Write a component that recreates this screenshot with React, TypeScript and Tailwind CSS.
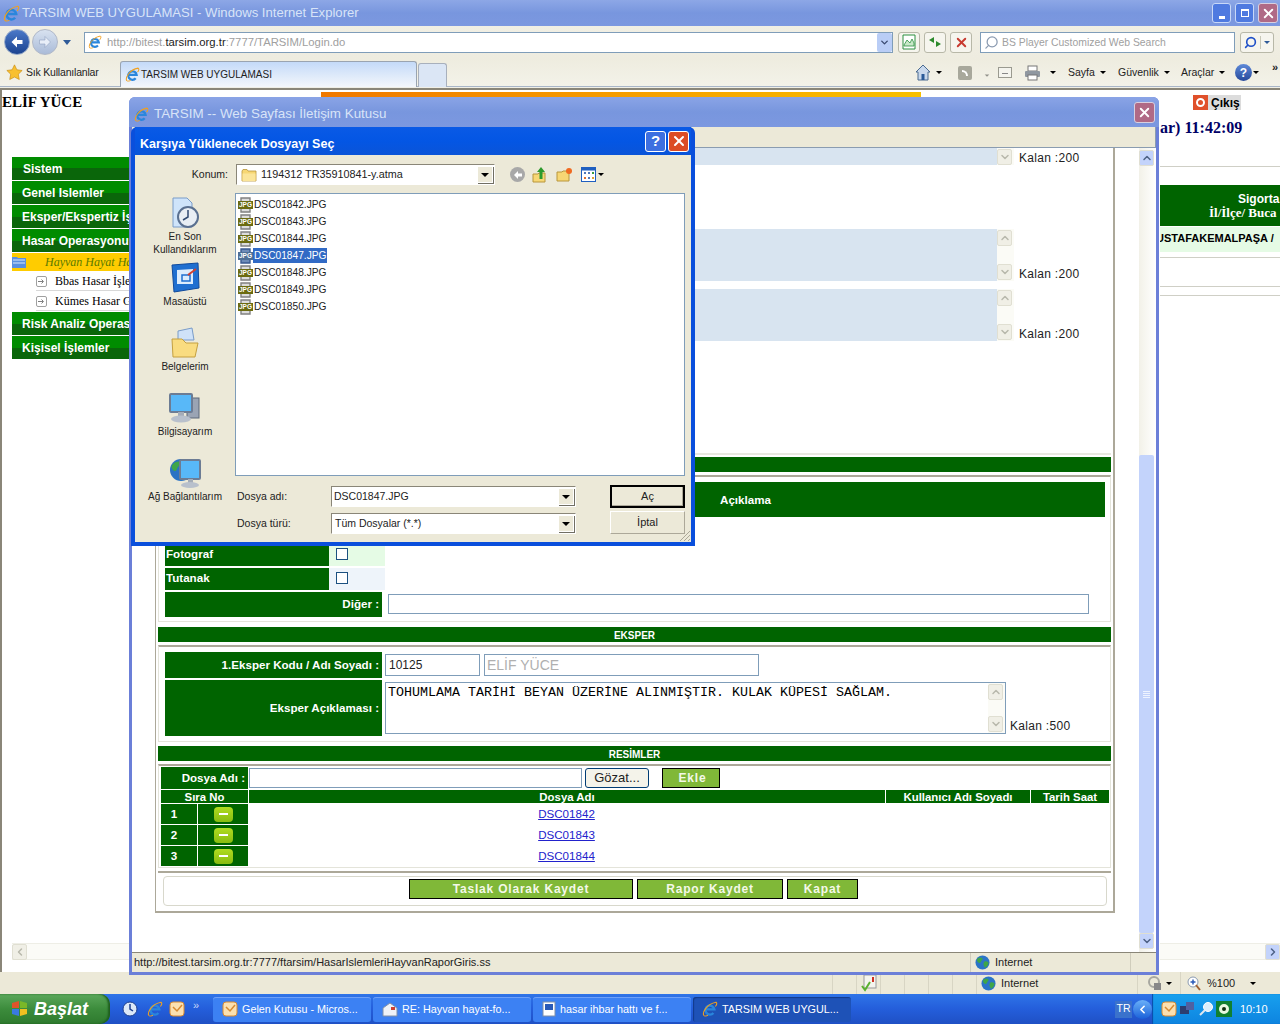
import React from "react";
import { ChevronUp, ChevronDown, ChevronLeft, ChevronRight, X, Search } from "lucide-react";

// small drawings -------------------------------------------------------------
function IeLogo({ size = 16 }: { size?: number }) {
  return (
    <svg width={size} height={size} viewBox="0 0 16 16" className="shrink-0">
      <path d="M3.6 8.4h8.8a4.5 4.5 0 1 0-1 3.6" fill="none" stroke="#2a86dc" strokeWidth="2.4" />
      <path d="M1.8 14.6C0.2 11.5 4.5 3 14 1.2c1.4.8.6 2.8-.6 4.300" fill="none" stroke="#f0a020" strokeWidth="1.1" />
      <path d="M1.8 14.6c1.200.8 3 .4 4.200-.4" fill="none" stroke="#f0a020" strokeWidth="1" />
    </svg>
  );
}

function Globe({ size = 16 }: { size?: number }) {
  return (
    <svg width={size} height={size} viewBox="0 0 16 16" className="shrink-0">
      <circle cx="8" cy="8" r="7.500" fill="#2b74c8" />
      <path d="M3 3.500c2-1.500 4-1 5 0 .5 1.500-1 2-1.500 3.500S5 9 3.500 8 1.500 5 3 3.500zM10 7c2-1 4 0 4.500 1.500-.5 3-2.500 4.500-4 5-.5-2-2-3-1.500-4.500z" fill="#3fa648" />
    </svg>
  );
}

function Folder({ size = 16 }: { size?: number }) {
  return (
    <svg width={size} height={size} viewBox="0 0 16 16" className="shrink-0">
      <path d="M1 4l1-1.500h4L7 4h8v10H1z" fill="#f7d774" stroke="#b8963c" strokeWidth=".8" />
      <path d="M1.500 6.500h13V14h-13z" fill="#fbe59a" />
    </svg>
  );
}

function JpgIcon({ dim = false }: { dim?: boolean }) {
  return (
    <svg width="15" height="16" viewBox="0 0 15 16" className="shrink-0">
      <path d="M3 1h9v14H3z" fill={dim ? "#6d8bb8" : "#dcdcdc"} stroke={dim ? "#3a5a90" : "#808080"} strokeWidth="1.400" />
      <rect x="0" y="4" width="15" height="8" fill={dim ? "#4f6f96" : "#6b6b10"} />
      <text x="7.500" y="10.400" textAnchor="middle" fontSize="6.500" fontWeight="700" fill="#fff" fontFamily="Liberation Sans">JPG</text>
    </svg>
  );
}

function Caret({ className = "" }: { className?: string }) {
  return <span className={`inline-block h-0 w-0 border-x-[3px] border-t-[3px] border-x-transparent border-t-black ${className}`} />;
}

function ScrollBtn({ dir, active = false }: { dir: "up" | "down" | "left" | "right"; active?: boolean }) {
  const cls = active ? "text-[#4d6185]" : "text-[#b8b8ac]";
  const Icon = dir === "up" ? ChevronUp : dir === "down" ? ChevronDown : dir === "left" ? ChevronLeft : ChevronRight;
  return (
    <div className={`flex h-[16px] w-[15px] shrink-0 items-center justify-center rounded-[2px] border border-[#e0dfd2] ${active ? "bg-[#c3d3fb]" : "bg-[#f0efe6]"}`}>
      <Icon size={12} strokeWidth={3} className={cls} />
    </div>
  );
}

function ComboBtn() {
  return (
    <div className="flex h-[17px] w-[16px] shrink-0 items-center justify-center border border-[#ffffff] bg-[#ece9d8] shadow-[1px_1px_0_#716f64]">
      <span className="h-0 w-0 border-x-[4px] border-t-[4px] border-x-transparent border-t-black" />
    </div>
  );
}

// top chrome -----------------------------------------------------------------
function TitleBar() {
  return (
    <div className="flex h-[26px] items-center bg-gradient-to-b from-[#8da7e6] via-[#7896de] to-[#7c98e0] pl-[3px] pr-[2px]">
      <IeLogo size={17} />
      <span className="ml-[2px] text-[13.100px] text-[#d8e4f8]">TARSIM WEB UYGULAMASI - Windows Internet Explorer</span>
      <div className="ml-auto flex gap-[4px]">
        <div className="flex h-[20px] w-[19px] items-end justify-center rounded-[3px] border border-[#c8d8f8] bg-[#4f7ae0] pb-[3px]"><span className="h-[3px] w-[6px] bg-white" /></div>
        <div className="flex h-[20px] w-[19px] items-center justify-center rounded-[3px] border border-[#c8d8f8] bg-[#4f7ae0]"><span className="h-[8px] w-[8px] border border-t-2 border-white" /></div>
        <div className="flex h-[20px] w-[20px] items-center justify-center rounded-[3px] border border-[#d8d0e0] bg-[#b06a86]"><X size={15} strokeWidth={3} className="text-white" /></div>
      </div>
    </div>
  );
}

function AddressBar() {
  return (
    <div className="flex h-[32px] items-center bg-gradient-to-b from-[#f1efe4] to-[#eeece0] pl-[4px] text-[11px]">
      <div className="flex h-[26px] w-[26px] items-center justify-center rounded-full border border-[#94a8c8] bg-gradient-to-b from-[#4a78c8] to-[#1c4490]">
        <svg width="16" height="16" viewBox="0 0 16 16"><path d="M8 2.500L2.500 8 8 13.500V10h5.500V6H8z" fill="#fff" /></svg>
      </div>
      <div className="ml-[2px] flex h-[26px] w-[26px] items-center justify-center rounded-full border border-[#b0b8c8] bg-gradient-to-b from-[#d8e2f0] to-[#aabbd8]">
        <svg width="16" height="16" viewBox="0 0 16 16"><path d="M8 2.500L13.500 8 8 13.500V10H2.500V6H8z" fill="#e8eef8" stroke="#8fa0c0" strokeWidth=".6" /></svg>
      </div>
      <span className="ml-[5px] h-0 w-0 border-x-[4px] border-t-[5px] border-x-transparent border-t-[#2f5a98]" />
      <div className="ml-[13px] flex h-[21px] w-[809px] items-center border border-[#7f9db9] bg-white pl-[3px]">
        <IeLogo size={14} />
        <span className="ml-[5px] pt-px text-[11.300px] text-[#a0a0a0]">http://bitest.<span className="text-[#222]">tarsim.org.tr</span>:7777/TARSIM/Login.do</span>
        <div className="ml-auto flex h-[19px] w-[15px] items-center justify-center rounded-[2px] bg-[#b9cdf6]"><ChevronDown size={11} strokeWidth={3} className="text-[#3a4a70]" /></div>
      </div>
      <div className="ml-[5px] flex h-[21px] w-[22px] items-center justify-center rounded-[3px] border border-[#b8b8a8] bg-[#f6f5ee]">
        <svg width="14" height="16" viewBox="0 0 14 16"><path d="M1 1h12v14H1z" fill="#fff" stroke="#2c9040" /><path d="M2 11l3-5 3 3 2-4 2 4v3H2z" fill="#c8e8c8" stroke="#2c9040" strokeWidth=".8" /></svg>
      </div>
      <div className="ml-[4px] flex h-[21px] w-[22px] items-center justify-center rounded-[3px] border border-[#b8b8a8] bg-[#f6f5ee]">
        <svg width="16" height="14" viewBox="0 0 16 14"><path d="M7 2L2 5l5 3V6z M9 12l5-3-5-3v2z" fill="#2c8a2c" /></svg>
      </div>
      <div className="ml-[4px] flex h-[21px] w-[22px] items-center justify-center rounded-[3px] border border-[#b8b8a8] bg-[#f6f5ee]"><X size={15} strokeWidth={3} className="text-[#c83a30]" /></div>
      <div className="ml-[8px] flex h-[21px] w-[255px] items-center border border-[#7f9db9] bg-white pl-[3px] text-[#a0a0a0]">
        <Search size={15} className="-scale-x-100 text-[#8a9ab0]" />
        <span className="ml-[3px] pt-[2px] text-[10.400px]">BS Player Customized Web Search</span>
      </div>
      <div className="ml-[5px] flex h-[21px] w-[34px] items-center rounded-[3px] border border-[#b8b8a8] bg-[#f6f5ee]">
        <div className="flex w-[20px] justify-center border-r border-[#c8c8b8]"><Search size={13} strokeWidth={3} className="-scale-x-100 text-[#1f50c8]" /></div>
        <div className="flex flex-1 justify-center"><span className="h-0 w-0 border-x-[3px] border-t-[3px] border-x-transparent border-t-[#2f5a98]" /></div>
      </div>
    </div>
  );
}

function MenuLink({ label, w }: { label: string; w: string }) {
  return (
    <span className={`flex items-center gap-[5px] whitespace-nowrap text-[10.500px] text-[#222] ${w}`}>
      {label}
      <Caret />
    </span>
  );
}

function TabsBar() {
  return (
    <div className="flex h-[32px] flex-col bg-gradient-to-b from-[#eeecdf] to-[#f4f3ea]">
      <div className="flex h-[29px] border-b border-[#a9b6c8]">
        <div className="flex w-[120px] items-center pl-[6px] pt-[1px]">
          <svg width="17" height="17" viewBox="0 0 16 16"><path d="M8 .8l2.200 4.600 5 .7-3.600 3.500.9 5L8 12.300l-4.500 2.300.9-5L.8 6.100l5-.7z" fill="#f8c030" stroke="#c88a10" strokeWidth=".6" /></svg>
          <span className="ml-[3px] whitespace-nowrap text-[10.500px] tracking-[-0.2px] text-[#222]">Sık Kullanılanlar</span>
        </div>
        <div className="mt-[3px] flex h-[26px] w-[297px] items-center rounded-t-[3px] border border-b-0 border-[#9aa4b0] bg-gradient-to-b from-[#c4daf8] to-[#f4f7fb] pl-[4px]">
          <IeLogo size={15} />
          <span className="ml-[1px] whitespace-nowrap text-[10px] text-[#222]">TARSIM WEB UYGULAMASI</span>
        </div>
        <div className="ml-[1px] mt-[5px] h-[24px] w-[29px] rounded-t-[3px] border border-b-0 border-[#a8b0bc] bg-[#dbe6f5]" />
        <div className="ml-[468px] flex items-center pt-[1px]">
          <div className="flex w-[42px] items-center gap-[5px]">
            <svg width="16" height="17" viewBox="0 0 16 17"><path d="M8 1L1 8h2v8h10V8h2z" fill="#c8d8ec" stroke="#4a6a90" /><rect x="6.500" y="10" width="3" height="6" fill="#2a5a98" /></svg>
            <Caret />
          </div>
          <div className="ml-px flex h-[14px] w-[14px] items-center justify-center rounded-[2px] bg-[#a8a89c]"><span className="h-[6px] w-[6px] rounded-tr-[6px] border-r-2 border-t-2 border-white" /></div>
          <span className="ml-[12px] scale-75 opacity-40"><Caret /></span>
          <div className="ml-[8px] h-[11px] w-[14px] border border-[#9a9a90] bg-[#f4f4ee]"><div className="mt-[5px] ml-[3px] h-px w-[6px] bg-[#888]" /></div>
          <svg width="17" height="16" viewBox="0 0 17 16" className="ml-[12px]"><rect x="4" y="1" width="9" height="5" fill="#fff" stroke="#777" /><rect x="1" y="6" width="15" height="6" rx="1" fill="#8f97a0" /><rect x="4" y="10" width="9" height="5" fill="#fff" stroke="#777" /></svg>
          <Caret className="ml-[9px]" />
          <MenuLink label="Sayfa" w="ml-[12px] w-[50px]" />
          <MenuLink label="Güvenlik" w="w-[63px]" />
          <MenuLink label="Araçlar" w="w-[54px]" />
          <div className="flex h-[17px] w-[17px] items-center justify-center rounded-full bg-gradient-to-b from-[#5f8ad8] to-[#274a9c] text-[12px] font-bold text-white">?</div>
          <Caret className="ml-[1px]" />
        </div>
        <span className="ml-[13px] text-[11px] font-bold leading-[18px] text-[#222]">»</span>
      </div>
      <div className="h-[1px] bg-[#f0efe6]" />
      <div className="h-[2px] bg-[#8a8678]" />
    </div>
  );
}

// background page ---------------------------------------------------------------
function SideItem({ label, pl = "pl-[10px]" }: { label: string; pl?: string }) {
  return (
    <div className={`flex h-[23px] items-center whitespace-nowrap bg-gradient-to-b from-[#008c00] from-50% to-[#0a660a] to-50% text-[12px] font-bold text-white ${pl}`}>
      {label}
    </div>
  );
}

function SubItem({ label }: { label: string }) {
  return (
    <div className="ml-[24px] flex h-[19px] items-center whitespace-nowrap border-b border-[#d8d8d8] [font-family:'Liberation_Serif',serif] text-[12px] text-black">
      <span className="flex h-[11px] w-[11px] shrink-0 items-center justify-center rounded-[2px] border border-[#a0a0a0]">
        <svg width="7" height="7" viewBox="0 0 7 7"><path d="M0 3.500h5M3.500 1.500l2 2-2 2" fill="none" stroke="#808080" /></svg>
      </span>
      <span className="ml-[8px]">{label}</span>
    </div>
  );
}

function PageLeft() {
  return (
    <div className="flex h-full flex-col border-l-2 border-[#8a8678] pt-[3px]">
      <div className="whitespace-nowrap [font-family:'Liberation_Serif',serif] text-[15px] font-bold leading-[18px] text-black">ELİF YÜCE</div>
      <div className="ml-[10px] mt-[46px] flex flex-col gap-px">
        <SideItem label="Sistem" pl="pl-[11px]" />
        <SideItem label="Genel Islemler" />
        <SideItem label="Eksper/Ekspertiz İşlemleri" />
        <SideItem label="Hasar Operasyonu" />
        <div className="flex h-[18px] items-center whitespace-nowrap bg-[#ffcc00] [font-family:'Liberation_Serif',serif] text-[12px] italic text-[#5a7a00]">
          <svg width="14" height="12" viewBox="0 0 14 12" className="shrink-0"><path d="M0 1h5l1 1h8v10H0z" fill="#5a90e0" /><path d="M1 4h12M1 7h12" stroke="#d8e8fc" /></svg>
          <span className="ml-[19px]">Hayvan Hayat Hasar</span>
        </div>
        <SubItem label="Bbas Hasar İşlemleri" />
        <SubItem label="Kümes Hasar Girişi" />
        <SideItem label="Risk Analiz Operasyonu" />
        <SideItem label="Kişisel İşlemler" />
      </div>
      <div className="ml-[10px] mt-auto mb-[12px] flex h-[17px] items-center border-y border-[#eeeee6] bg-[#fbfbf7]">
        <ScrollBtn dir="left" />
      </div>
    </div>
  );
}

function PageRight() {
  return (
    <div className="flex h-full flex-col overflow-hidden">
      <div className="ml-[33px] mt-[5px] flex h-[15px] w-[48px] items-center bg-[#dcdcdc]">
        <span className="flex h-[15px] w-[15px] items-center justify-center bg-[#e0502a]"><span className="h-[9px] w-[9px] rounded-full border-2 border-white" /></span>
        <span className="ml-[3px] text-[12px] font-bold text-black">Çıkış</span>
      </div>
      <div className="mt-[9px] whitespace-nowrap [font-family:'Liberation_Serif',serif] text-[16px] font-bold leading-[18px] text-[#000066]">ar) 11:42:09</div>
      <div className="mt-[29px] h-px bg-[#cfcfc6]" />
      <div className="mt-[18px] flex h-[41px] flex-col justify-center bg-[#006400] text-[12px] font-bold leading-[13px] text-white">
        <span className="pl-[78px]">Sigorta</span>
        <span className="pl-[49px] [font-family:'Liberation_Serif',serif] text-[13px]">İl/İlçe/ Buca</span>
      </div>
      <div className="mt-px flex h-[25px] items-center whitespace-nowrap bg-[#e5fbe5] pb-[2px] text-[11px] font-bold text-black"><span className="-ml-[4px]">USTAFAKEMALPAŞA /</span></div>
      <div className="mt-[5px] h-px bg-[#cfcfc6]" />
      <div className="mt-[28px] h-px bg-[#cfcfc6]" />
      <div className="mt-[8px] h-px bg-[#cfcfc6]" />
      <div className="mt-auto mb-[12px] flex h-[17px] items-center justify-end border-y border-[#eeeee6] bg-[#fbfbf7]">
        <ScrollBtn dir="right" active />
      </div>
    </div>
  );
}

// dialog form -------------------------------------------------------------------
function Bar({ label }: { label: string }) {
  return <div className="flex h-[15px] items-center justify-center bg-[#006400] pt-px text-[10px] font-bold text-white">{label}</div>;
}

function Label({ children, className = "" }: { children?: React.ReactNode; className?: string }) {
  return <div className={`flex shrink-0 items-center bg-[#006400] text-[11.600px] font-bold text-white ${className}`}>{children}</div>;
}

function Memo({ tinted = false, onlyDown = false, className = "", children }: { tinted?: boolean; onlyDown?: boolean; className?: string; children?: React.ReactNode }) {
  return (
    <div className={`flex justify-between ${tinted ? "bg-[#d8e4f0]" : "border border-[#7f9db9] bg-white"} ${className}`}>
      <div className="min-w-0 flex-1">{children}</div>
      <div className="flex w-[17px] shrink-0 flex-col justify-between bg-[#fbfbf6] py-px">
        {!onlyDown && <ScrollBtn dir="up" />}
        <ScrollBtn dir="down" />
      </div>
    </div>
  );
}

function Kalan({ value, className = "" }: { value: number; className?: string }) {
  return <span className={`self-end whitespace-nowrap text-[12px] leading-[13px] tracking-[0.3px] text-[#222] ${className}`}>Kalan :{value}</span>;
}

function GreenBtn({ label, className = "" }: { label: string; className?: string }) {
  return <div className={`flex h-[20px] items-center justify-center border border-black bg-[#80b838] text-[12px] font-bold tracking-[0.8px] text-[#f4f8e8] ${className}`}>{label}</div>;
}

function PhotoRow({ n, file }: { n: number; file: string }) {
  return (
    <div className="mt-px flex h-[20px]">
      <Label className="w-[36px] justify-center pr-[10px]">{n}</Label>
      <div className="ml-px flex w-[50px] items-center justify-center bg-[#006400]">
        <span className="flex h-[15px] w-[19px] items-center justify-center rounded-[4px] bg-gradient-to-b from-[#b0dc20] to-[#88bc10]"><span className="h-[2px] w-[9px] bg-white" /></span>
      </div>
      <div className="flex w-[636px] items-center justify-center pl-px text-[11.600px] text-[#2222cc] underline">{file}</div>
    </div>
  );
}

function ScrollbarV() {
  return (
    <div className="flex w-[17px] shrink-0 flex-col bg-gradient-to-r from-[#f2f1e8] to-[#ffffff] pt-[2px]">
      <ScrollBtn dir="up" active />
      <div className="h-[289px]" />
      <div className="flex h-[478px] w-[15px] items-center justify-center rounded-[2px] bg-[#c3d3fb]">
        <div className="flex w-[7px] flex-col gap-px"><span className="h-px bg-[#eef3ff]" /><span className="h-px bg-[#eef3ff]" /><span className="h-px bg-[#eef3ff]" /><span className="h-px bg-[#eef3ff]" /></div>
      </div>
      <ScrollBtn dir="down" active />
    </div>
  );
}

function FormPage() {
  return (
    <div className="ml-[23px] h-[765px] w-[960px] border-b-2 border-l border-r-2 border-[#aca899] pl-[2px]">
      <div className="w-[953px]">
        <div className="flex h-[17px]">
          <Memo tinted onlyDown className="w-[856px]" />
          <Kalan value={200} className="ml-[5px]" />
        </div>
        <div className="mt-[64px] flex h-[52px]">
          <Memo tinted className="w-[856px]" />
          <Kalan value={200} className="ml-[5px]" />
        </div>
        <div className="mt-[8px] flex h-[52px]">
          <Memo tinted className="w-[856px]" />
          <Kalan value={200} className="ml-[5px]" />
        </div>
        <div className="mt-[112px] h-[2px] bg-[#e8e8e0]" />
        <div className="mt-[2px]"><Bar label="GENEL" /></div>

        <div className="mt-[3px] h-[147px] border-b border-t-2 border-x border-[#e4e4da] border-t-[#aca899] pl-[6px] pt-[5px]">
          <div className="flex h-[35px]">
            <Label className="w-[221px]" />
            <Label className="w-[719px] justify-center pt-px">Açıklama</Label>
          </div>
          <div className="mt-[27px] flex h-[22px]">
            <Label className="w-[164px] pb-[2px] pl-px">Fotograf</Label>
            <div className="flex w-[56px] items-center bg-[#e5fbe5] pb-[2px] pl-[7px]"><span className="h-[12px] w-[12px] border border-[#1c5180] bg-white" /></div>
          </div>
          <div className="mt-[2px] flex h-[22px]">
            <Label className="w-[164px] pb-[2px] pl-px">Tutanak</Label>
            <div className="flex w-[56px] items-center bg-[#eef4fa] pb-[2px] pl-[7px]"><span className="h-[12px] w-[12px] border border-[#1c5180] bg-white" /></div>
          </div>
          <div className="mt-[2px] flex h-[25px]">
            <Label className="w-[217px] justify-end pb-[2px] pr-[3px]">Diğer :</Label>
            <div className="ml-[6px] mt-[2px] h-[20px] w-[701px] border border-[#7f9db9] bg-white" />
          </div>
        </div>

        <div className="mt-[5px]"><Bar label="EKSPER" /></div>
        <div className="mt-[3px] h-[97px] border-b border-t-2 border-x border-[#e4e4da] border-t-[#aca899] pl-[6px] pt-[5px]">
          <div className="flex h-[26px]">
            <Label className="w-[217px] justify-end pr-[3px]">1.Eksper Kodu / Adı Soyadı :</Label>
            <div className="ml-[3px] mt-[2px] flex h-[22px] w-[95px] items-center border border-[#7f9db9] bg-white pl-[3px] text-[12px] text-[#222]">10125</div>
            <div className="ml-[4px] mt-[2px] flex h-[22px] w-[275px] items-center border border-[#7f9db9] bg-white pl-[2px] text-[14px] text-[#b0b0b0]">ELİF YÜCE</div>
          </div>
          <div className="mt-[2px] flex h-[56px]">
            <Label className="w-[217px] justify-end pr-[3px]">Eksper Açıklaması :</Label>
            <Memo className="ml-[3px] mt-[2px] h-[52px] w-[621px]">
              <div className="whitespace-nowrap pl-[2px] pt-[3px] [font-family:'Liberation_Mono',monospace] text-[13.330px] leading-[14px] text-black">TOHUMLAMA TARİHİ BEYAN ÜZERİNE ALINMIŞTIR. KULAK KÜPESİ SAĞLAM.</div>
            </Memo>
            <Kalan value={500} className="mb-[3px] ml-[4px]" />
          </div>
        </div>

        <div className="mt-[4px]"><Bar label="RESİMLER" /></div>
        <div className="mt-[3px] h-[104px] border-b border-t-2 border-x border-[#e4e4da] border-t-[#aca899] pl-[2px] pt-px">
          <div className="flex h-[22px]">
            <Label className="w-[87px] justify-end pr-[3px]">Dosya Adı :</Label>
            <div className="ml-px mt-px h-[20px] w-[333px] border border-[#7f9db9] bg-white" />
            <div className="ml-[3px] mt-px flex h-[20px] w-[64px] items-center justify-center rounded-[3px] border border-[#003c74] bg-[#f4f3ea] text-[13px] text-[#222]">Gözat...</div>
            <GreenBtn label="Ekle" className="ml-[13px] mt-px w-[58px] pl-[3px]" />
          </div>
          <div className="mt-px flex h-[13px] text-center text-[11.400px] font-bold leading-[14px] text-white">
            <div className="w-[87px] bg-[#006400]">Sıra No</div>
            <div className="ml-px w-[636px] bg-[#006400]">Dosya Adı</div>
            <div className="ml-px w-[144px] bg-[#006400]">Kullanıcı Adı Soyadı</div>
            <div className="ml-px w-[78px] bg-[#006400]">Tarih Saat</div>
          </div>
          <PhotoRow n={1} file="DSC01842" />
          <PhotoRow n={2} file="DSC01843" />
          <PhotoRow n={3} file="DSC01844" />
        </div>

        <div className="mt-[3px] h-[39px] border-t-2 border-[#aca899] pl-[5px] pr-[4px] pt-[3px]">
          <div className="h-[30px] rounded-[4px] border border-[#d8d8cc] pl-[245px] pt-[2px]">
            <div className="flex">
              <GreenBtn label="Taslak Olarak Kaydet" className="w-[224px]" />
              <GreenBtn label="Rapor Kaydet" className="ml-[4px] w-[146px]" />
              <GreenBtn label="Kapat" className="ml-[4px] w-[71px]" />
            </div>
          </div>
        </div>
      </div>
    </div>
  );
}

function ModalWindow() {
  return (
    <div className="absolute left-[129px] top-[97px] flex h-[878px] w-[1030px] flex-col rounded-t-[6px] bg-[#6b7fd8] px-[3px] pb-[3px]">
      <div className="-mx-[3px] flex h-[30px] shrink-0 items-center rounded-t-[6px] bg-gradient-to-b from-[#8aa4e6] via-[#7896de] to-[#7c98e0] pl-[5px] pr-[4px]">
        <span className="pt-[4px]"><IeLogo size={15} /></span>
        <span className="ml-[5px] pt-[4px] text-[13.400px] text-[#d8e4f8]">TARSIM -- Web Sayfası İletişim Kutusu</span>
        <div className="ml-auto flex h-[21px] w-[21px] items-center justify-center rounded-[3px] border border-[#d8d0e0] bg-[#b06a86]"><X size={15} strokeWidth={3} className="text-white" /></div>
      </div>
      <div className="h-[21px] shrink-0 border-b border-r border-[#8a9cb0] bg-[#ece9d8]" />
      <div className="flex h-[804px] shrink-0 bg-white">
        <div className="flex-1"><FormPage /></div>
        <ScrollbarV />
      </div>
      <div className="flex h-[20px] shrink-0 items-center border-t border-[#8a8678] bg-[#ece9d8] pl-[2px] text-[11px] text-[#222]">
        <span className="w-[836px] whitespace-nowrap">http://bitest.tarsim.org.tr:7777/ftarsim/HasarIslemleriHayvanRaporGiris.ss</span>
        <div className="flex h-full w-[161px] items-center border-x border-[#d0cdbc] pl-[4px]">
          <Globe size={15} />
          <span className="ml-[5px]">Internet</span>
        </div>
      </div>
    </div>
  );
}

// file picker ---------------------------------------------------------------------
const files = ["DSC01842.JPG", "DSC01843.JPG", "DSC01844.JPG", "DSC01847.JPG", "DSC01848.JPG", "DSC01849.JPG", "DSC01850.JPG"];

function Place({ icon, label, h }: { icon: React.ReactNode; label: React.ReactNode; h: string }) {
  return (
    <div className={`flex flex-col items-center text-center text-[10px] leading-[13px] text-[#222] ${h}`}>
      <div className="flex h-[32px] items-center justify-center">{icon}</div>
      <div className="mt-[1px] whitespace-nowrap">{label}</div>
    </div>
  );
}

function FilePicker() {
  return (
    <div className="absolute left-[131px] top-[127px] flex h-[419px] w-[564px] flex-col rounded-t-[6px] bg-[#0a4fdc] px-[4px] pb-[4px]">
      <div className="flex h-[28px] shrink-0 items-center bg-gradient-to-b from-[#0a5ae6] via-[#0456e4] to-[#0a54d8] pl-[5px] pr-[2px]">
        <span className="pt-[6px] text-[12.500px] font-bold text-white">Karşıya Yüklenecek Dosyayı Seç</span>
        <div className="ml-auto flex h-[21px] w-[21px] items-center justify-center rounded-[3px] border border-white bg-[#3d6fe0] text-[15px] font-bold text-white">?</div>
        <div className="ml-[2px] flex h-[21px] w-[21px] items-center justify-center rounded-[3px] border border-white bg-[#dc4c24]"><X size={16} strokeWidth={3} className="text-white" /></div>
      </div>
      <div className="relative flex flex-1 flex-col bg-[#ece9d8] text-[11px] text-[#222]">
        <div className="flex h-[21px] shrink-0 mt-[9px] items-center">
          <span className="w-[93px] text-right text-[10.500px]">Konum:</span>
          <div className="ml-[8px] flex h-[21px] w-[259px] items-center justify-between border border-[#ffffff] border-l-[#8a8678] border-t-[#8a8678] bg-white pl-[4px] pr-[1px]">
            <span className="flex items-center gap-[4px] text-[10.800px]"><Folder size={16} />1194312 TR35910841-y.atma</span>
            <ComboBtn />
          </div>
          <div className="ml-[15px] flex h-[15px] w-[15px] items-center justify-center rounded-full bg-[#a8a8a8]"><svg width="10" height="10" viewBox="0 0 10 10"><path d="M5 1L1 5l4 4V6.500h4v-3H5z" fill="#fff" /></svg></div>
          <svg width="16" height="17" viewBox="0 0 16 17" className="ml-[7px]"><path d="M1 8h5l1-1h6v9H1z" fill="#f7d774" stroke="#b8963c" /><path d="M9 1l4 5h-2.500v7h-3V6H5z" fill="#2c9a2c" /></svg>
          <svg width="17" height="15" viewBox="0 0 17 15" className="ml-[8px]"><path d="M1 5h5l1-1h6v10H1z" fill="#f7d774" stroke="#b8963c" /><circle cx="13" cy="4" r="3" fill="#f06a20" /></svg>
          <svg width="15" height="15" viewBox="0 0 15 15" className="ml-[8px]"><rect x=".5" y=".5" width="14" height="14" fill="#fff" stroke="#1f5fc0" /><rect x="1" y="1" width="13" height="2.500" fill="#1f5fc0" /><rect x="3" y="5" width="2" height="2" fill="#5078b8" /><rect x="7" y="5" width="2" height="2" fill="#5078b8" /><rect x="11" y="5" width="2" height="2" fill="#3a9a40" /><rect x="3" y="10" width="2" height="2" fill="#e07030" /><rect x="7" y="10" width="2" height="2" fill="#5078b8" /><rect x="11" y="10" width="2" height="2" fill="#e0a030" /></svg>
          <Caret className="ml-[2px]" />
        </div>
        <div className="mt-[8px] flex">
          <div className="w-[100px] shrink-0 pt-[4px]">
            <Place h="h-[65px]" label={<>En Son<br />Kullandıklarım</>} icon={
              <svg width="32" height="32" viewBox="0 0 32 32"><path d="M4 1h14l5 5v24H4z" fill="#cfe4fa" stroke="#7a9cc8" /><circle cx="19" cy="20" r="10" fill="#e8eef4" stroke="#5a7090" strokeWidth="2" /><path d="M19 13v7l-5 3" stroke="#304a70" strokeWidth="1.500" fill="none" /></svg>
            } />
            <Place h="h-[65px]" label="Masaüstü" icon={
              <svg width="32" height="32" viewBox="0 0 32 32"><path d="M3 3l26-2 1 25-25 4z" fill="#1f6fd0" stroke="#104a9c" /><path d="M8 8l16-1v15H8z" fill="#dcecfc" /><path d="M13 13h8v6h-8z" fill="none" stroke="#1f6fd0" strokeWidth="1.500" /><path d="M19 13l8-6" stroke="#d04030" strokeWidth="2" /></svg>
            } />
            <Place h="h-[65px]" label="Belgelerim" icon={
              <svg width="30" height="32" viewBox="0 0 30 32"><path d="M8 4l14-3 2 12H8z" fill="#cfe2f8" stroke="#7a9cc8" /><path d="M2 12l10 0 4 4h12l-3 14H3z" fill="#f9dc80" stroke="#c4a040" /></svg>
            } />
            <Place h="h-[65px]" label="Bilgisayarım" icon={
              <svg width="32" height="32" viewBox="0 0 32 32"><rect x="18" y="6" width="12" height="20" fill="#9aa4b4" stroke="#5c6878" /><rect x="1" y="2" width="22" height="18" rx="1" fill="#58b8f8" stroke="#6c7c94" strokeWidth="2" /><rect x="9" y="20" width="6" height="5" fill="#a4acb8" /><ellipse cx="12" cy="27" rx="10" ry="3.500" fill="#b8c0cc" /></svg>
            } />
            <Place h="h-[40px]" label="Ağ Bağlantılarım" icon={
              <svg width="34" height="32" viewBox="0 0 34 32"><circle cx="13" cy="13" r="11" fill="#2a72c4" /><path d="M4 8c3-4 7-4 9-3 0 3-3 4-4 7s-3 2-4 1-2-3-1-5z" fill="#3fa648" /><rect x="12" y="3" width="20" height="19" rx="1" fill="#58b8f8" stroke="#6c7c94" strokeWidth="2" /><rect x="20" y="22" width="5" height="5" fill="#a4acb8" /><ellipse cx="22" cy="28" rx="9" ry="3" fill="#b8c0cc" /></svg>
            } />
          </div>
          <div className="w-[450px] shrink-0">
            <div className="h-[283px] border border-[#7f9db9] bg-white pl-[2px] pt-[2px]">
              {files.map((f) => {
                const sel = f === "DSC01847.JPG";
                return (
                  <div key={f} className="flex h-[17px] items-center">
                    <JpgIcon dim={sel} />
                    <span className={`px-px text-[10.200px] leading-[15px] ${sel ? "bg-[#316ac5] text-white" : "text-[#222]"}`}>{f}</span>
                  </div>
                );
              })}
            </div>
            <div className="mt-[9px] flex">
              <div className="w-[375px] pl-[2px] pt-px text-[10.500px]">
                <div className="flex h-[21px] items-center">
                  <span className="w-[94px]">Dosya adı:</span>
                  <div className="flex h-[21px] w-[245px] items-center justify-between border border-white border-l-[#8a8678] border-t-[#8a8678] bg-white pl-[2px] pr-px">
                    DSC01847.JPG
                    <ComboBtn />
                  </div>
                </div>
                <div className="mt-[6px] flex h-[21px] items-center">
                  <span className="w-[94px]">Dosya türü:</span>
                  <div className="flex h-[21px] w-[245px] items-center justify-between border border-white border-l-[#8a8678] border-t-[#8a8678] bg-white pl-[3px] pr-px">
                    Tüm Dosyalar (*.*)
                    <ComboBtn />
                  </div>
                </div>
              </div>
              <div className="w-[75px]">
                <div className="flex h-[23px] items-center justify-center border-2 border-black bg-[#ece9d8] shadow-[inset_-1px_-1px_0_#aca899]">Aç</div>
                <div className="mt-[3px] flex h-[23px] items-center justify-center border border-white border-b-[#aca899] border-r-[#aca899] bg-[#ece9d8]">İptal</div>
              </div>
            </div>
          </div>
        </div>
        <svg width="12" height="12" viewBox="0 0 12 12" className="absolute bottom-0 right-0"><path d="M11 1L1 11M11 5L5 11M11 9l-2 2" stroke="#aca899" /></svg>
      </div>
    </div>
  );
}

// bottom ---------------------------------------------------------------------------
function StatusBar() {
  return (
    <div className="flex h-[22px] items-center bg-[#ece9d8] text-[11px] text-[#222]">
      <div className="ml-[832px] flex h-full">
        {[0, 1, 2, 3, 4, 5].map((i) => (
          <div key={i} className="flex h-full w-[24px] items-center justify-center border-l border-[#d8d5c4]">
            {i === 1 && (
              <svg width="16" height="18" viewBox="0 0 16 18"><rect x="3" y="1" width="12" height="13" fill="#f4f4ee" stroke="#999" /><path d="M1 12l3 4 5-8" stroke="#5ab030" strokeWidth="2" fill="none" /><path d="M12 3v5" stroke="#d03020" strokeWidth="2" /></svg>
            )}
          </div>
        ))}
      </div>
      <div className="flex h-full w-[161px] items-center border-l border-[#d8d5c4] pl-[4px]">
        <Globe size={15} />
        <span className="ml-[5px]">Internet</span>
      </div>
      <div className="flex h-full w-[43px] items-center gap-[3px] border-l border-[#d8d5c4] pl-[9px]">
        <svg width="16" height="16" viewBox="0 0 16 16"><circle cx="7" cy="7" r="5" fill="none" stroke="#a8a8a0" strokeWidth="2" /><rect x="7" y="8" width="7" height="7" fill="#888" /></svg>
        <Caret />
      </div>
      <div className="flex h-full w-[80px] items-center border-l border-[#d8d5c4] pl-[6px]">
        <svg width="14" height="15" viewBox="0 0 14 15"><circle cx="6" cy="6" r="5" fill="#fff" stroke="#8a9ab0" /><path d="M3.500 6h5M6 3.500v5" stroke="#2a5ab8" strokeWidth="1.500" /><path d="M9 9l4 5" stroke="#a06030" strokeWidth="2" /></svg>
        <span className="ml-[6px]">%100</span>
        <Caret className="ml-[15px]" />
      </div>
    </div>
  );
}

function TaskBtn({ icon, label, active = false }: { icon: React.ReactNode; label: string; active?: boolean }) {
  return (
    <div className={`flex h-[25px] w-[158px] shrink-0 items-center gap-[4px] rounded-[3px] pl-[9px] text-[10.800px] ${active ? "bg-[#1e52b7] shadow-[inset_1px_1px_1px_#123a8a]" : "bg-[#3c81f3] shadow-[inset_0_1px_0_#6ea0f8]"} text-white`}>
      {icon}
      <span className="whitespace-nowrap">{label}</span>
    </div>
  );
}

function OutlookIcon() {
  return (
    <svg width="16" height="16" viewBox="0 0 16 16" className="shrink-0"><rect x="1" y="1" width="14" height="14" rx="3" fill="#fbe0b0" stroke="#d88a30" /><path d="M4 6l4 4 5-6" stroke="#d88a30" strokeWidth="1.500" fill="none" /></svg>
  );
}

function Taskbar() {
  return (
    <div className="flex h-[30px] items-center bg-gradient-to-b from-[#2f74e8] via-[#245edb] to-[#1f50c4] text-white">
      <div className="flex h-full w-[110px] shrink-0 items-center rounded-r-[10px] bg-gradient-to-b from-[#5ba85b] via-[#3c8c3c] to-[#2e7a2e] pl-[10px] shadow-[inset_-2px_0_2px_#1e5e1e]">
        <svg width="20" height="20" viewBox="0 0 20 20"><path d="M2 4l7-2v7H2z" fill="#e0532a" /><path d="M10 2l7 2v5h-7z" fill="#7ab828" /><path d="M2 10h7v7l-7-2z" fill="#3a7ae0" /><path d="M10 10h7v5l-7 2z" fill="#f0c020" /></svg>
        <span className="ml-[4px] text-[18px] font-bold italic">Başlat</span>
      </div>
      <div className="flex w-[103px] shrink-0 items-center pl-[12px]">
        <svg width="16" height="16" viewBox="0 0 16 16"><circle cx="8" cy="8" r="7" fill="#dce8f8" stroke="#1d3f90" /><path d="M8 3v5l3 2" stroke="#1d3f90" strokeWidth="1.500" fill="none" /></svg>
        <span className="ml-[9px]"><IeLogo size={16} /></span>
        <span className="ml-[6px]"><OutlookIcon /></span>
        <span className="ml-[8px] -mt-[8px] text-[11px] text-[#c8d8f8]">»</span>
      </div>
      <div className="flex gap-[2px]">
        <TaskBtn icon={<OutlookIcon />} label="Gelen Kutusu - Micros..." />
        <TaskBtn icon={<svg width="16" height="16" viewBox="0 0 16 16"><path d="M1 7l7-5 7 5v8H1z" fill="#eef2f8" stroke="#8090a8" /><rect x="9" y="6" width="4" height="3" fill="#d04030" /></svg>} label="RE: Hayvan hayat-fo..." />
        <TaskBtn icon={<svg width="14" height="16" viewBox="0 0 14 16"><rect x="1" y="1" width="12" height="14" fill="#fff" stroke="#8090a8" /><rect x="3" y="3" width="8" height="6" fill="#2a5ab8" /></svg>} label="hasar ihbar hattı ve f..." />
        <TaskBtn active icon={<IeLogo size={16} />} label="TARSIM WEB UYGUL..." />
      </div>
      <span className="ml-[264px] flex h-[17px] w-[17px] items-center justify-center bg-[#3a72cc] text-[10.500px]">TR</span>
      <div className="ml-[20px] flex h-full flex-1 items-center bg-gradient-to-b from-[#18a0ee] to-[#0e84e0] shadow-[inset_1px_0_1px_#0a4aa8]">
        <span className="-ml-[19px] flex h-[19px] w-[19px] items-center justify-center rounded-full bg-gradient-to-b from-[#6ab0f8] to-[#1a5fd8]"><ChevronLeft size={13} strokeWidth={3} className="text-white" /></span>
        <span className="ml-[9px]"><OutlookIcon /></span>
        <svg width="16" height="16" viewBox="0 0 16 16" className="ml-[2px]"><rect x="1" y="5" width="9" height="8" fill="#2c3e70" /><rect x="7" y="1" width="8" height="8" fill="#5060a0" /></svg>
        <svg width="16" height="16" viewBox="0 0 16 16" className="ml-[3px]"><circle cx="10" cy="6" r="4.500" fill="#dceefc" stroke="#fff" /><path d="M7 9l-5 5" stroke="#e0e8f0" strokeWidth="2" /></svg>
        <span className="ml-[2px] flex h-[16px] w-[16px] items-center justify-center bg-[#108030]"><span className="h-[10px] w-[10px] rounded-full border-[3px] border-[#e8f8e0] bg-[#103010]" /></span>
        <span className="ml-[8px] text-[11px]">10:10</span>
      </div>
    </div>
  );
}

export default function App() {
  return (
    <div className="relative flex h-[1024px] w-[1280px] flex-col overflow-hidden bg-white [font-family:'Liberation_Sans',sans-serif]">
      <TitleBar />
      <AddressBar />
      <TabsBar />
      <div className="grid h-[882px] grid-cols-[130px_1030px_120px] bg-white">
        <PageLeft />
        <div className="pl-[191px] pt-[2px]">
          <div className="h-[5px] w-[600px] bg-gradient-to-r from-[#f07800] to-[#f8c000]" />
        </div>
        <PageRight />
      </div>
      <StatusBar />
      <Taskbar />
      <ModalWindow />
      <FilePicker />
    </div>
  );
}
